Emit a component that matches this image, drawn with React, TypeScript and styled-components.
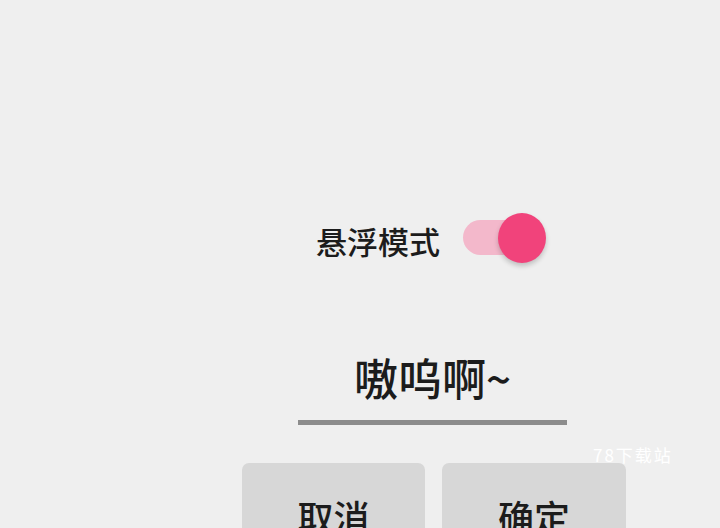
import React, { useState } from "react";
import styled, { createGlobalStyle } from "styled-components";

const GlobalStyle = createGlobalStyle`
  html, body {
    margin: 0;
    padding: 0;
    background: #efefef;
    overflow: hidden;
  }
  body {
    font-family: "Noto Sans CJK SC", "Noto Sans", sans-serif;
    color: #1c1c1c;
  }
`;

const Page = styled.div`
  position: relative;
  width: 720px;
  height: 528px;
  overflow: hidden;
  background: #efefef;
`;

const Column = styled.div`
  margin-left: 242px;
  width: 384px;
  padding-top: 208px;
  display: flex;
  flex-direction: column;
`;

const SwitchRow = styled.div`
  height: 60px;
  display: flex;
  align-items: center;
  justify-content: center;
  gap: 23px;
  padding-right: 7px;
`;

const Label = styled.span`
  font-size: 31px;
  font-weight: 500;
  line-height: 1;
  margin-top: 4px;
`;

const SwitchTrack = styled.button<{ $on: boolean }>`
  position: relative;
  width: 82px;
  height: 60px;
  padding: 0;
  border: none;
  background: transparent;
  cursor: pointer;

  &::before {
    content: "";
    position: absolute;
    left: 0;
    top: 12px;
    width: 68px;
    height: 35px;
    border-radius: 18px;
    background: ${(p) => (p.$on ? "#f3b8cb" : "#c4c4c4")};
  }
`;

const Thumb = styled.span<{ $on: boolean }>`
  position: absolute;
  top: 5px;
  left: ${(p) => (p.$on ? "35px" : "0px")};
  width: 48px;
  height: 50px;
  border-radius: 50%;
  background: ${(p) => (p.$on ? "#f1437b" : "#fafafa")};
  box-shadow: 0 3px 5px rgba(0, 0, 0, 0.2);
`;

const NameInput = styled.input`
  margin: 85px 0 0 56px;
  width: 269px;
  height: 72px;
  box-sizing: border-box;
  padding: 0 0 20px;
  border: none;
  border-bottom: 5px solid #8c8c8c;
  background: transparent;
  font-family: "Noto Sans CJK SC", "Noto Sans", sans-serif;
  font-size: 44px;
  font-weight: 500;
  color: #1c1c1c;
  text-align: center;
  outline: none;
`;

const Buttons = styled.div`
  margin-top: 38px;
  display: grid;
  grid-template-columns: 183px 184px;
  gap: 17px;
`;

const DialogButton = styled.button`
  height: 106px;
  border: none;
  border-radius: 7px;
  background: #d7d7d7;
  font-family: "Noto Sans CJK SC", "Noto Sans", sans-serif;
  font-size: 36px;
  font-weight: 500;
  color: #1c1c1c;
  padding: 0;
  cursor: pointer;
`;

const Watermark = styled.span`
  position: absolute;
  left: 593px;
  top: 442px;
  font-size: 17px;
  color: #ffffff;
  letter-spacing: 2px;
`;

export default function App() {
  const [floating, setFloating] = useState(true);
  const [name, setName] = useState("嗷呜啊~");
  return (
    <Page>
      <GlobalStyle />
      <Column>
        <SwitchRow>
          <Label>悬浮模式</Label>
          <SwitchTrack $on={floating} onClick={() => setFloating(!floating)}>
            <Thumb $on={floating} />
          </SwitchTrack>
        </SwitchRow>
        <NameInput value={name} onChange={(e) => setName(e.target.value)} />
        <Buttons>
          <DialogButton>取消</DialogButton>
          <DialogButton>确定</DialogButton>
        </Buttons>
      </Column>
      <Watermark>78下载站</Watermark>
    </Page>
  );
}
